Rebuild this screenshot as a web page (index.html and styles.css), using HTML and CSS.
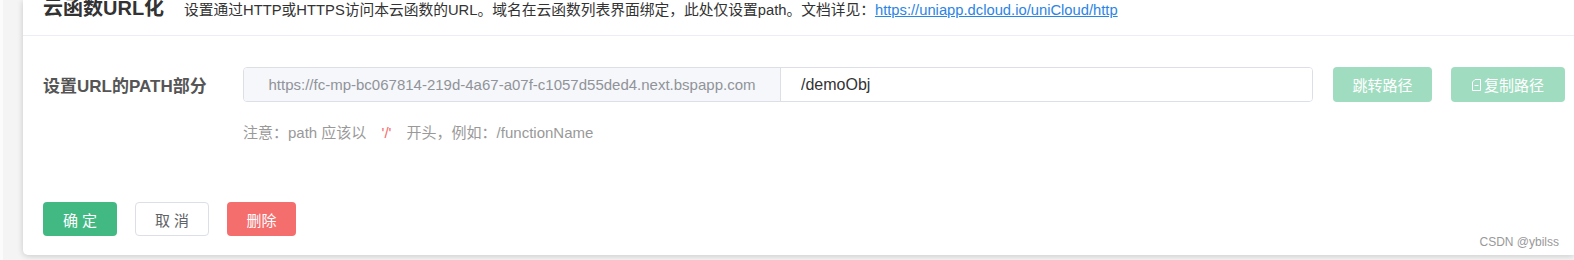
FILE: index.html
```html
<!DOCTYPE html>
<html lang="zh-CN">
<head>
    <meta charset="UTF-8">
    <meta name="viewport" content="width=device-width, initial-scale=1.0">
    <title>云函数URL化</title>
    <link rel="stylesheet" href="styles.css">
</head>
<body>
    <div class="page">
        <div class="card">
            <div class="card-head">
                <span class="head-title">云函数URL化</span>
                <span class="head-desc">设置通过HTTP或HTTPS访问本云函数的URL。域名在云函数列表界面绑定，此处仅设置path。文档详见：<a class="head-link" href="#">https://uniapp.dcloud.io/uniCloud/http</a></span>
            </div>

            <div class="card-body">
                <div class="form-row">
                    <div class="form-label">设置URL的PATH部分</div>
                    <div class="input-group">
                        <div class="input-prepend">https://fc-mp-bc067814-219d-4a67-a07f-c1057d55ded4.next.bspapp.com</div>
                        <input class="input-path" type="text" value="/demoObj">
                    </div>
                    <button class="btn btn-light btn-jump" type="button">跳转路径</button>
                    <button class="btn btn-light btn-copy" type="button">
                        <svg class="copy-icon" width="9" height="12" viewBox="0 0 9 12">
                            <path d="M3 .5H8.5V11.5H.5V3Z" fill="none" stroke="#fff" stroke-width="1"/>
                            <path d="M2.5 6.5H6.5" stroke="#fff" stroke-width="1"/>
                        </svg>复制路径
                    </button>
                </div>
                <div class="form-tip">注意：path 应该以 <span class="tip-mark">'/'</span> 开头，例如：/functionName</div>

                <div class="form-actions">
                    <button class="btn btn-primary" type="button">确 定</button>
                    <button class="btn btn-default" type="button">取 消</button>
                    <button class="btn btn-danger" type="button">删除</button>
                </div>
            </div>

            <div class="watermark">CSDN @ybilss</div>
        </div>
    </div>
</body>
</html>
```

FILE: styles.css
```css
body {
    margin: 0;
    font-family: "Liberation Sans", "Noto Sans CJK SC", sans-serif;
    background-color: #f4f4f4;
    color: #333;
    overflow: hidden;
}

.page {
    height: 260px;
    border-left: 3px solid #fbfbfb;
    padding-left: 20px;
    box-sizing: border-box;
}

.card {
    position: relative;
    display: flow-root;
    height: 255px;
    background-color: #fff;
    border-radius: 0 0 0 5px;
    box-shadow: 0 1px 6px rgba(0, 0, 0, 0.18);
    box-sizing: border-box;
}

.card-head {
    display: flex;
    align-items: baseline;
    margin-top: -4px;
    height: 40px;
    padding-left: 20px;
    border-bottom: 1px solid #ebeef5;
    box-sizing: border-box;
    line-height: 24px;
    white-space: nowrap;
}

.head-title {
    font-size: 20px;
    font-weight: bold;
    color: #333;
    margin-right: 20px;
}

.head-desc {
    font-size: 14.75px;
    color: #333;
}

.head-link {
    color: #2b85e4;
    text-decoration: underline;
}

.card-body {
    padding: 31px 9px 0 20px;
}

.form-row {
    display: flex;
    align-items: center;
    height: 35px;
}

.form-label {
    width: 200px;
    flex-shrink: 0;
    font-size: 17px;
    font-weight: bold;
    color: #555;
}

.input-group {
    display: flex;
    flex: 1;
    height: 35px;
    border: 1px solid #dcdfe6;
    border-radius: 4px;
    box-sizing: border-box;
    overflow: hidden;
}

.input-prepend {
    width: 536px;
    flex-shrink: 0;
    background-color: #f5f7fa;
    border-right: 1px solid #dcdfe6;
    color: #909399;
    font-size: 15px;
    line-height: 33px;
    text-align: center;
    white-space: nowrap;
}

.input-path {
    flex: 1;
    min-width: 0;
    border: none;
    outline: none;
    padding: 0 20px;
    font: 16px "Liberation Sans", "Noto Sans CJK SC", sans-serif;
    color: #333;
}

.btn {
    height: 34px;
    border-radius: 4px;
    font: 15px "Liberation Sans", "Noto Sans CJK SC", sans-serif;
    border: 1px solid transparent;
    padding: 0;
    cursor: pointer;
    display: inline-flex;
    align-items: center;
    justify-content: center;
}

.btn-light {
    height: 35px;
    background-color: #a0dcc0;
    color: #fff;
    flex-shrink: 0;
}

.btn-jump {
    width: 99px;
    margin-left: 20px;
}

.btn-copy {
    width: 114px;
    margin-left: 19px;
}

.copy-icon {
    margin-right: 3px;
}

.form-tip {
    margin-top: 21px;
    padding-left: 200px;
    font-size: 15px;
    line-height: 20px;
    color: #999;
}

.tip-mark {
    color: #f56c6c;
    margin: 0 11px;
}

.form-actions {
    display: flex;
    gap: 18px;
    margin-top: 59px;
}

.btn-primary {
    width: 74px;
    background-color: #42b983;
    color: #fff;
}

.btn-default {
    width: 74px;
    background-color: #fff;
    border-color: #dcdfe6;
    color: #606266;
}

.btn-danger {
    width: 69px;
    background-color: #f46e6e;
    color: #fff;
}

.watermark {
    position: absolute;
    right: 15px;
    bottom: 6px;
    font-size: 12px;
    color: #999;
}
```
